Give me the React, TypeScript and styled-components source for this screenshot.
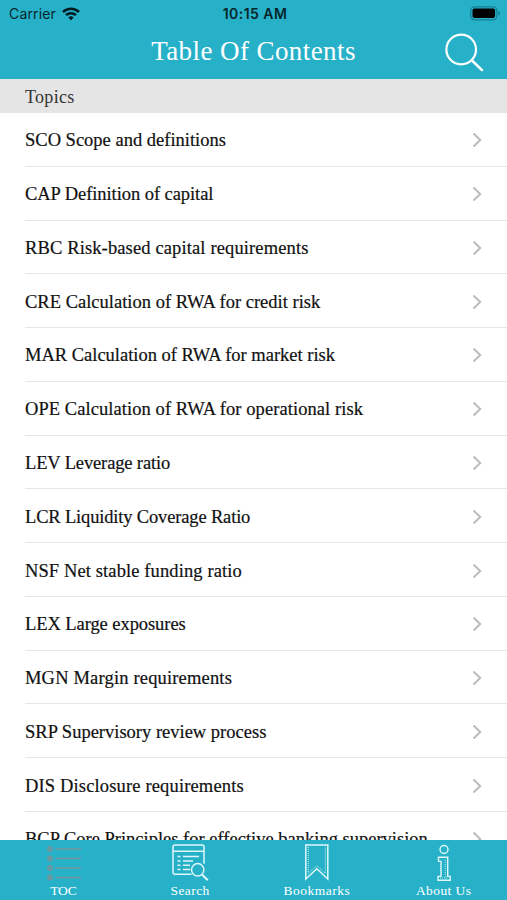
import React from "react";
import styled, { createGlobalStyle } from "styled-components";

const Global = createGlobalStyle`
  * { box-sizing: border-box; }
  body { margin: 0; background: #fff; overflow: hidden; }
`;

const serif = `Georgia, "Liberation Serif", serif`;

const Screen = styled.div`
  width: 507px;
  height: 900px;
  display: flex;
  flex-direction: column;
  overflow: hidden;
  background: #fff;
`;
const Header = styled.header`
  flex: none;
  height: 79px;
  background: #27b1c8;
`;
const StatusBar = styled.div`
  height: 26px;
  display: grid;
  grid-template-columns: 1fr auto 1fr;
  align-items: center;
  padding: 1px 6px 0 9px;
  font: 14px/20px Inter, sans-serif;
  color: #06262c;
`;
const Carrier = styled.div`
  display: flex;
  align-items: center;
  gap: 6px;
  letter-spacing: 0.15px;
`;
const Time = styled.div`
  font-weight: 600;
  font-size: 14px;
  letter-spacing: 0.45px;
`;
const Battery = styled.svg`
  justify-self: end;
`;
const NavBar = styled.div`
  height: 53px;
  display: grid;
  grid-template-columns: 62px 1fr 62px;
  align-items: center;
`;
const Title = styled.h1`
  margin: 0;
  text-align: center;
  color: #fff;
  font: 400 27px/34px ${serif};
  letter-spacing: 0.42px;
  white-space: nowrap;
  padding-bottom: 3px;
`;
const Section = styled.h2`
  flex: none;
  margin: 0;
  height: 34px;
  padding-left: 25px;
  background: #e5e5e5;
  color: #333;
  font: 400 18px/36px ${serif};
  letter-spacing: 0.3px;
`;
const List = styled.ul`
  flex: 1;
  min-height: 0;
  margin: 0;
  padding: 0;
  list-style: none;
  overflow: hidden;
`;
const Row = styled.li`
  height: 53.77px;
  margin-left: 25px;
  padding: 2px 24px 0 0;
  display: flex;
  align-items: center;
  justify-content: space-between;
  border-bottom: 1px solid #e6e6e6;
`;
const Label = styled.span<{ $track: number }>`
  font: 18.5px/24px ${serif};
  letter-spacing: ${(p) => p.$track}px;
  color: #111;
  white-space: nowrap;
  -webkit-text-stroke: 0.2px #111;
`;
const TabBar = styled.nav`
  flex: none;
  height: 60px;
  display: grid;
  grid-template-columns: repeat(4, 1fr);
  background: #27b1c8;
`;
const Tab = styled.div`
  display: flex;
  flex-direction: column;
  align-items: center;
  padding-top: 3px;
`;
const TabLabel = styled.span<{ $track: number }>`
  font: 13.5px/16px ${serif};
  letter-spacing: ${(p) => p.$track}px;
  color: #fff;
  white-space: nowrap;
`;

const topics: [string, number][] = [
  ["SCO Scope and definitions", 0],
  ["CAP Definition of capital", -0.06],
  ["RBC Risk-based capital requirements", 0.13],
  ["CRE Calculation of RWA for credit risk", 0.01],
  ["MAR Calculation of RWA for market risk", -0.01],
  ["OPE Calculation of RWA for operational risk", 0.07],
  ["LEV Leverage ratio", -0.14],
  ["LCR Liquidity Coverage Ratio", -0.16],
  ["NSF Net stable funding ratio", 0.11],
  ["LEX Large exposures", -0.07],
  ["MGN Margin requirements", 0.17],
  ["SRP Supervisory review process", 0],
  ["DIS Disclosure requirements", 0.15],
  ["BCP Core Principles for effective banking supervision", 0],
];

const Wifi = () => (
  <svg width="18" height="14" viewBox="0 0 18 14" fill="none" stroke="#001a20" strokeWidth="2.5">
    <path d="M1 5a11.5 11.5 0 0 1 16 0" />
    <path d="M4 8.2a7.2 7.2 0 0 1 10 0" />
    <path d="M6.3 10.6a4 4 0 0 1 5.4 0L9 13.3Z" fill="#001a20" stroke="none" />
  </svg>
);

const Chevron = () => (
  <svg width="12" height="16" viewBox="0 0 12 16" fill="none" stroke="#bcbcbc" strokeWidth="2">
    <path d="M2.5 1.5 9.2 8l-6.7 6.5" />
  </svg>
);

const SearchGlass = () => (
  <svg width="40" height="40" viewBox="0 0 40 40" fill="none" stroke="#fff" strokeWidth="2.2" strokeLinecap="round">
    <circle cx="16.2" cy="16.5" r="14.8" />
    <path d="m27 27.5 10 9.7" strokeWidth="2.5" />
  </svg>
);

const TocIcon = () => (
  <svg width="40" height="40" viewBox="0 0 40 40" fill="none" stroke="#72979f" strokeWidth="1.5">
    {[6, 15.5, 25, 34.5].map((y) => (
      <g key={y}>
        <circle cx="7" cy={y} r="2.2" fill="#5c9ca8" />
        <path d={`M12.5 ${y}h25.5`} />
      </g>
    ))}
  </svg>
);

const SearchIcon = () => (
  <svg width="40" height="40" viewBox="0 0 40 40" fill="none" stroke="#e0f7fa" strokeWidth="1.5">
    <path d="M21.5 31.3H4.7a1.7 1.7 0 0 1-1.7-1.7V3.8a1.7 1.7 0 0 1 1.7-1.7h27.6A1.7 1.7 0 0 1 34 3.8v17M3 8.2h31" />
    <path d="M7.5 13.5h3M13 13.5h16M7.5 18h3M13 18h10M7.5 22.2h3M13 22.2h7M7.5 26.5h3M13 26.5h7" />
    <circle cx="27.7" cy="26.8" r="6.2" />
    <path d="m32.2 31.7 5.6 5.6" strokeWidth="2" />
  </svg>
);

const BookmarkIcon = () => (
  <svg width="40" height="40" viewBox="0 0 40 40" fill="none" stroke="#e0f7fa">
    <path d="M8.8 2h22v34L19.8 25.8 8.8 36Z" strokeWidth="1.5" />
    <path d="M11.3 4v26.3l8.5-7.8 8.5 7.8V4" strokeWidth=".9" strokeDasharray="1 1" />
  </svg>
);

const InfoIcon = () => (
  <svg width="40" height="40" viewBox="0 0 40 40" fill="none" stroke="#e0f7fa" strokeWidth="1.4">
    <circle cx="20" cy="6.5" r="4" />
    <path d="M14.5 14.2h9.2v19.2h2.5v3.8H14v-3.8h3v-15h-2.5Z" />
    <path d="M21.3 17v17M16 35h8" strokeWidth=".8" strokeDasharray="1 1" />
  </svg>
);

export default function App() {
  return (
    <Screen>
      <Global />
      <Header>
        <StatusBar>
          <Carrier>
            Carrier
            <Wifi />
          </Carrier>
          <Time>10:15 AM</Time>
          <Battery width="31" height="15" viewBox="0 0 31 15">
            <rect x=".8" y=".8" width="26" height="13" rx="3.6" fill="none" stroke="#168093" strokeWidth="1.2" />
            <rect x="2.5" y="2.5" width="22.6" height="9.6" rx="2" fill="#000" />
            <path d="M28.3 5v4.5c2.3-.7 2.3-3.8 0-4.5" fill="#168093" />
          </Battery>
        </StatusBar>
        <NavBar>
          <span />
          <Title>Table Of Contents</Title>
          <SearchGlass />
        </NavBar>
      </Header>
      <Section>Topics</Section>
      <List>
        {topics.map(([text, track]) => (
          <Row key={text}>
            <Label $track={track}>{text}</Label>
            <Chevron />
          </Row>
        ))}
      </List>
      <TabBar>
        <Tab><TocIcon /><TabLabel $track={-0.2}>TOC</TabLabel></Tab>
        <Tab><SearchIcon /><TabLabel $track={0.4}>Search</TabLabel></Tab>
        <Tab><BookmarkIcon /><TabLabel $track={0.5}>Bookmarks</TabLabel></Tab>
        <Tab><InfoIcon /><TabLabel $track={0.4}>About Us</TabLabel></Tab>
      </TabBar>
    </Screen>
  );
}
